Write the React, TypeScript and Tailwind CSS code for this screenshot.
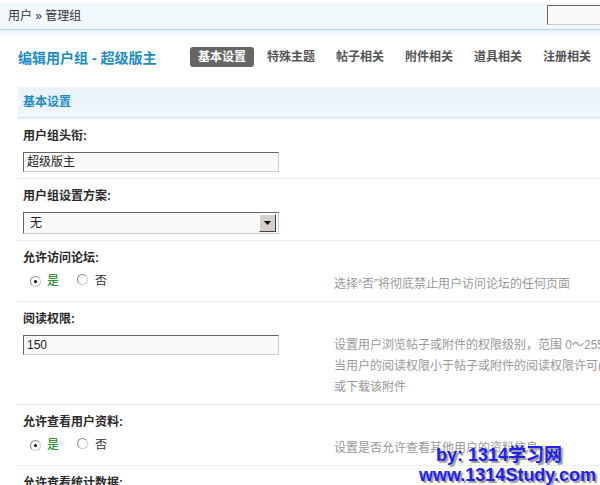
import React from 'react';

const font = { fontFamily: '"Liberation Sans", "Noto Sans CJK SC", sans-serif' };

function Radio({ checked }: { checked?: boolean }) {
  return (
    <span className="relative inline-block h-[11px] w-[11px] rounded-full border border-[#888] border-r-[#ccc] border-b-[#ccc] bg-white">
      {checked && <span className="absolute left-[3px] top-[3px] h-[3px] w-[3px] rounded-full bg-black" />}
    </span>
  );
}

function YesNo() {
  return (
    <div className="flex h-[20px] -translate-y-[3px] items-center pl-[7px] text-[12px] leading-[14px]">
      <Radio checked />
      <span className="ml-[6px] text-[#008000]">是</span>
      <span className="ml-[18px]"><Radio /></span>
      <span className="ml-[7px] text-[#333]">否</span>
    </div>
  );
}

function TextBox({ value }: { value: string }) {
  return (
    <div className="h-[20px] w-[256px] border border-t-[#666] border-l-[#666] border-r-[#ccc] border-b-[#ccc] bg-[#fafafa] pl-[3px] text-[12px] leading-[18px] text-[#222]">
      {value}
    </div>
  );
}

function Row({ label, control, tip }: { label: string; control: React.ReactNode; tip?: React.ReactNode }) {
  return (
    <div className="border-t border-dotted border-[#c9e4f4] pt-[8px] pb-[6px] pl-[5px]">
      <div className="h-[18px] text-[12px] font-bold leading-[18px] text-[#2a2a2a]">{label}</div>
      <div className="mt-[7px] flex">
        <div className="w-[311px] shrink-0">{control}</div>
        <div className="whitespace-nowrap text-[12px] leading-[21px] text-[#999]">{tip}</div>
      </div>
    </div>
  );
}

const tabs = ['基本设置', '特殊主题', '帖子相关', '附件相关', '道具相关', '注册相关', '其他'];

export default function App() {
  return (
    <div className="relative h-[485px] w-[600px] overflow-hidden bg-white" style={font}>
      <div className="w-[780px]">
        <div className="h-[3px] bg-white" />
        <div className="flex h-[27px] items-center justify-between border-b border-[#b6d5df] bg-[#f2f9fd] pl-[8px]">
          <span className="text-[12px] text-[#333]">用户 » 管理组</span>
          <div className="mr-[133px] h-[20px] w-[100px] -translate-y-[1px] border border-t-[#666] border-l-[#666] border-r-[#ccc] border-b-[#ccc] bg-[#fafafa]" />
        </div>
        <div className="h-[8px] bg-gradient-to-b from-[#e8f2fb] to-white" />

        <div className="flex h-[40px] items-center pl-[18px]">
          <h1 className="w-[172px] text-[14px] font-bold text-[#1b8cc4]">编辑用户组 - 超级版主</h1>
          <div className="flex gap-[5px] -translate-y-[1px]">
            {tabs.map((t, i) => (
              <span
                key={t}
                className={
                  i === 0
                    ? 'h-[20px] rounded-[3px] bg-[#666] px-[8px] text-[12px] font-bold leading-[20px] text-white'
                    : 'h-[20px] px-[8px] text-[12px] font-bold leading-[20px] text-[#555]'
                }
              >
                {t}
              </span>
            ))}
          </div>
        </div>

        <div className="ml-[18px] mt-[9px]">
          <div className="h-[31px] border-b border-dotted border-[#c4def0] bg-gradient-to-b from-[#e9f3fc] to-[#f0f6fd] pl-[5px] text-[12px] font-bold leading-[31px] text-[#1b8cc4]">
            基本设置
          </div>
          <Row label="用户组头衔:" control={<TextBox value="超级版主" />} />
          <Row
            label="用户组设置方案:"
            control={
              <div className="flex h-[22px] w-[256px] items-center justify-between border border-t-[#666] border-l-[#666] border-r-[#ccc] border-b-[#ccc] bg-[#fafafa] pl-[6px] pr-[2px]">
                <span className="text-[12px] text-[#222]">无</span>
                <span className="flex h-[18px] w-[17px] items-center justify-center border border-t-[#fff] border-l-[#fff] border-r-[#404040] border-b-[#404040] bg-[#d4d0c8]">
                  <svg width="7" height="4" viewBox="0 0 7 4"><path d="M0 0h7L3.5 4z" fill="#000" /></svg>
                </span>
              </div>
            }
          />
          <Row label="允许访问论坛:" control={<YesNo />} tip="选择“否”将彻底禁止用户访问论坛的任何页面" />
          <Row
            label="阅读权限:"
            control={<TextBox value="150" />}
            tip={
              <>
                设置用户浏览帖子或附件的权限级别，范围 0～255，0 为禁止用户浏览任何帖子或附件。
                <br />
                当用户的阅读权限小于帖子或附件的阅读权限许可(默认时为 1)时，用户将不能阅读该帖子
                <br />
                或下载该附件
              </>
            }
          />
          <Row label="允许查看用户资料:" control={<YesNo />} tip="设置是否允许查看其他用户的资料信息" />
          <Row label="允许查看统计数据:" control={<YesNo />} tip="" />
        </div>
      </div>

      <div
        className="absolute left-[419px] top-[445px] w-[181px] text-[18px] font-bold leading-[20px] text-[#2020f0]"
        style={{ textShadow: '2px 2px 1px #9a9a9a' }}
      >
        <div className="pl-[17px]">by: 1314学习网</div>
        <div>www.1314Study.com</div>
      </div>
    </div>
  );
}
